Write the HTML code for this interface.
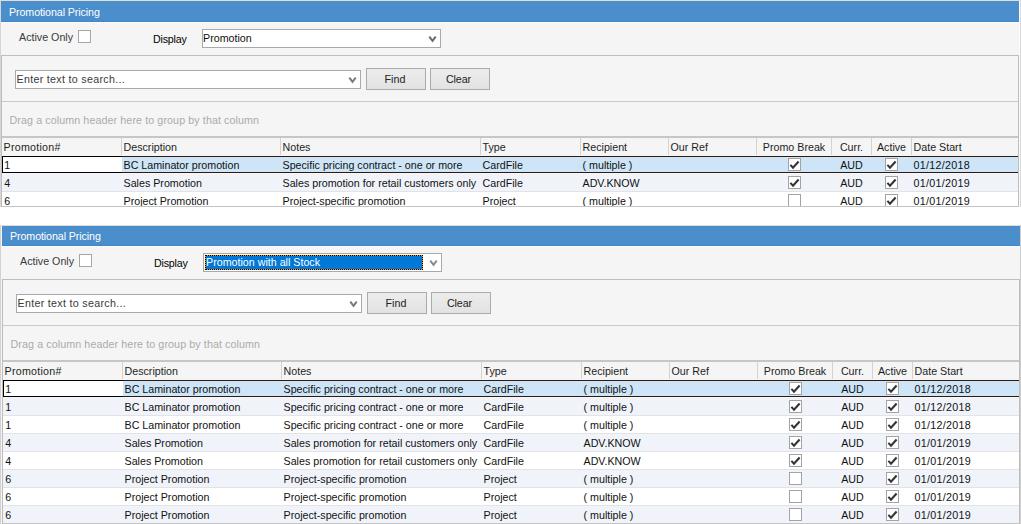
<!DOCTYPE html>
<html><head><meta charset="utf-8"><style>
html,body{margin:0;padding:0;}
body{width:1021px;height:524px;overflow:hidden;background:#ffffff;position:relative;font-family:"Liberation Sans",sans-serif;}
.panel{position:absolute;overflow:hidden;}
.r{position:absolute;}
.t{position:absolute;white-space:nowrap;font-size:10.7px;line-height:13px;}
.cb{width:13px;height:13px;box-sizing:border-box;border:1px solid #a3a3a3;background:#fff;}
.btn{box-sizing:border-box;border:1px solid #ababab;background:linear-gradient(#ececec,#e2e2e2);}
.focus{box-sizing:border-box;background:#f7931e;border:1px dotted #000;}
</style></head><body>
<div class="panel" style="left:0px;top:0px;width:1021px;height:207px;">
<div class="r" style="left:0px;top:0px;width:1021px;height:1px;background:#e2ddd7;"></div>
<div class="r" style="left:0px;top:0px;width:1px;height:207px;background:#d6d6d6;"></div>
<div class="r" style="left:1px;top:1px;width:1018px;height:21px;background:#4a8ecb;"></div>
<div class="r" style="left:1px;top:21px;width:1018px;height:1px;background:#4186c7;"></div>
<div class="r" style="left:1px;top:22px;width:1019px;height:1px;background:#fdfdfd;"></div>
<div class="r" style="left:1px;top:23px;width:1019px;height:184px;background:#f5f5f5;"></div>
<div class="r" style="left:1019px;top:1px;width:1px;height:207px;background:#fbfbfb;"></div>
<div class="r" style="left:1020px;top:0px;width:1px;height:207px;background:#d9d9d9;"></div>
<div class="t" style="left:9px;top:5.8px;color:#ffffff;letter-spacing:-0.1px;">Promotional Pricing</div>
<div class="t" style="left:19px;top:30.8px;color:#3a3a3a;">Active Only</div>
<div class="r" style="left:78px;top:30px;width:13px;height:13px;background:#ffffff;box-sizing:border-box;border:1px solid #a6a6a6;"></div>
<div class="t" style="left:153px;top:32.8px;color:#000000;letter-spacing:-0.2px;">Display</div>
<div class="r" style="left:202px;top:29px;width:239px;height:19px;background:#ffffff;box-sizing:border-box;border:1px solid #a9a9a9;"></div>
<div class="t" style="left:203px;top:31.8px;color:#111111;">Promotion</div>
<svg class="r" style="left:428px;top:36px" width="9" height="7" viewBox="0 0 9 7"><path d="M1.3 0.6 L4.5 4.9 L7.7 0.6" fill="none" stroke="#6a6a6a" stroke-width="2"/></svg>
<div class="r" style="left:1px;top:55px;width:1018px;height:152px;background:#f5f5f5;box-sizing:border-box;border:1px solid #bdbdbd;border-bottom:none;"></div>
<div class="r" style="left:15px;top:70px;width:346px;height:19px;background:#ffffff;box-sizing:border-box;border:1px solid #a9a9a9;"></div>
<div class="t" style="left:16.5px;top:72.8px;color:#3a3a3a;letter-spacing:0.3px;">Enter text to search...</div>
<svg class="r" style="left:348px;top:77px" width="9" height="7" viewBox="0 0 9 7"><path d="M1.3 0.6 L4.5 4.9 L7.7 0.6" fill="none" stroke="#7a7a7a" stroke-width="2"/></svg>
<div class="r btn" style="left:366px;top:68px;width:60px;height:22px;"></div>
<div class="t" style="left:365px;width:60px;text-align:center;top:72.8px;color:#222;">Find</div>
<div class="r btn" style="left:430px;top:68px;width:60px;height:22px;"></div>
<div class="t" style="left:428.5px;width:60px;text-align:center;top:72.8px;color:#222;letter-spacing:-0.1px;">Clear</div>
<div class="r" style="left:2px;top:101px;width:1016px;height:1px;background:#c9c9c9;"></div>
<div class="t" style="left:9.5px;top:113.8px;color:#ababab;letter-spacing:0.1px;">Drag a column header here to group by that column</div>
<div class="r" style="left:2px;top:136px;width:1016px;height:2px;background:#c6c6c6;"></div>
<div class="t" style="left:3.5px;top:140.8px;color:#1e1e1e;letter-spacing:0.25px;">Promotion#</div>
<div class="r" style="left:121px;top:138px;width:1px;height:17px;background:#d3d3d3;"></div>
<div class="t" style="left:123.5px;top:140.8px;color:#1e1e1e;">Description</div>
<div class="r" style="left:280px;top:138px;width:1px;height:17px;background:#d3d3d3;"></div>
<div class="t" style="left:282.5px;top:140.8px;color:#1e1e1e;">Notes</div>
<div class="r" style="left:480px;top:138px;width:1px;height:17px;background:#d3d3d3;"></div>
<div class="t" style="left:482.5px;top:140.8px;color:#1e1e1e;">Type</div>
<div class="r" style="left:580px;top:138px;width:1px;height:17px;background:#d3d3d3;"></div>
<div class="t" style="left:582.5px;top:140.8px;color:#1e1e1e;">Recipient</div>
<div class="r" style="left:668px;top:138px;width:1px;height:17px;background:#d3d3d3;"></div>
<div class="t" style="left:670.5px;top:140.8px;color:#1e1e1e;">Our Ref</div>
<div class="r" style="left:756px;top:138px;width:1px;height:17px;background:#d3d3d3;"></div>
<div class="t" style="left:757px;width:74px;text-align:center;top:140.8px;color:#1e1e1e;">Promo Break</div>
<div class="r" style="left:831px;top:138px;width:1px;height:17px;background:#d3d3d3;"></div>
<div class="t" style="left:832px;width:39px;text-align:center;top:140.8px;color:#1e1e1e;">Curr.</div>
<div class="r" style="left:871px;top:138px;width:1px;height:17px;background:#d3d3d3;"></div>
<div class="t" style="left:872px;width:39px;text-align:center;top:140.8px;color:#1e1e1e;">Active</div>
<div class="r" style="left:911px;top:138px;width:1px;height:17px;background:#d3d3d3;"></div>
<div class="t" style="left:913.5px;top:140.8px;color:#1e1e1e;">Date Start</div>
<div class="r" style="left:2px;top:156px;width:1016px;height:17px;background:#cde5f7;"></div>
<div class="r" style="left:2px;top:173px;width:1016px;height:1px;background:#f4f8fb;"></div>
<div class="r" style="left:2px;top:156px;width:120px;height:17px;background:#ffffff;"></div>
<div class="r" style="left:2px;top:156px;width:120px;height:1px;background:#000;"></div>
<div class="r" style="left:2px;top:172px;width:120px;height:1px;background:#000;"></div>
<div class="r" style="left:2px;top:156px;width:1px;height:17px;background:#000;"></div>
<div class="r" style="left:122px;top:156px;width:896px;height:1px;background:#33190a;"></div>
<div class="r" style="left:122px;top:172px;width:896px;height:1px;background:#33190a;"></div>
<div class="t" style="left:4.2px;top:158.8px;color:#111111;">1</div>
<div class="t" style="left:123.5px;top:158.8px;color:#111111;">BC Laminator promotion</div>
<div class="t" style="left:282.5px;top:158.8px;color:#111111;">Specific pricing contract - one or more</div>
<div class="t" style="left:482.5px;top:158.8px;color:#111111;">CardFile</div>
<div class="t" style="left:582.5px;top:158.8px;color:#111111;">( multiple )</div>
<div class="r cb" style="left:788px;top:158px;"></div><svg class="r" style="left:788px;top:158px" width="13" height="13" viewBox="0 0 13 13"><path d="M2.4 6.9 L5 9.7 L10.6 3.5" fill="none" stroke="#353535" stroke-width="2.1"/></svg>
<div class="t" style="left:832px;width:39px;text-align:center;top:158.8px;color:#111111;">AUD</div>
<div class="r cb" style="left:885px;top:158px;"></div><svg class="r" style="left:885px;top:158px" width="13" height="13" viewBox="0 0 13 13"><path d="M2.4 6.9 L5 9.7 L10.6 3.5" fill="none" stroke="#353535" stroke-width="2.1"/></svg>
<div class="t" style="left:913.5px;top:158.8px;color:#111111;letter-spacing:0.3px;">01/12/2018</div>
<div class="r" style="left:2px;top:174px;width:1016px;height:17px;background:#f0f4fa;"></div>
<div class="r" style="left:2px;top:191px;width:1016px;height:1px;background:#e3e3e3;"></div>
<div class="t" style="left:4.2px;top:176.8px;color:#111111;">4</div>
<div class="t" style="left:123.5px;top:176.8px;color:#111111;">Sales Promotion</div>
<div class="t" style="left:282.5px;top:176.8px;color:#111111;">Sales promotion for retail customers only</div>
<div class="t" style="left:482.5px;top:176.8px;color:#111111;">CardFile</div>
<div class="t" style="left:582.5px;top:176.8px;color:#111111;">ADV.KNOW</div>
<div class="r cb" style="left:788px;top:176px;"></div><svg class="r" style="left:788px;top:176px" width="13" height="13" viewBox="0 0 13 13"><path d="M2.4 6.9 L5 9.7 L10.6 3.5" fill="none" stroke="#353535" stroke-width="2.1"/></svg>
<div class="t" style="left:832px;width:39px;text-align:center;top:176.8px;color:#111111;">AUD</div>
<div class="r cb" style="left:885px;top:176px;"></div><svg class="r" style="left:885px;top:176px" width="13" height="13" viewBox="0 0 13 13"><path d="M2.4 6.9 L5 9.7 L10.6 3.5" fill="none" stroke="#353535" stroke-width="2.1"/></svg>
<div class="t" style="left:913.5px;top:176.8px;color:#111111;letter-spacing:0.3px;">01/01/2019</div>
<div class="r" style="left:2px;top:192px;width:1016px;height:17px;background:#ffffff;"></div>
<div class="r" style="left:2px;top:209px;width:1016px;height:1px;background:#e3e3e3;"></div>
<div class="t" style="left:4.2px;top:194.8px;color:#111111;">6</div>
<div class="t" style="left:123.5px;top:194.8px;color:#111111;">Project Promotion</div>
<div class="t" style="left:282.5px;top:194.8px;color:#111111;">Project-specific promotion</div>
<div class="t" style="left:482.5px;top:194.8px;color:#111111;">Project</div>
<div class="t" style="left:582.5px;top:194.8px;color:#111111;">( multiple )</div>
<div class="r cb" style="left:788px;top:194px;"></div>
<div class="t" style="left:832px;width:39px;text-align:center;top:194.8px;color:#111111;">AUD</div>
<div class="r cb" style="left:885px;top:194px;"></div><svg class="r" style="left:885px;top:194px" width="13" height="13" viewBox="0 0 13 13"><path d="M2.4 6.9 L5 9.7 L10.6 3.5" fill="none" stroke="#353535" stroke-width="2.1"/></svg>
<div class="t" style="left:913.5px;top:194.8px;color:#111111;letter-spacing:0.3px;">01/01/2019</div>
<div class="r" style="left:1px;top:206px;width:1018px;height:1px;background:#c4c4c4;"></div>
</div>
<div class="panel" style="left:1px;top:224px;width:1021px;height:300px;">
<div class="r" style="left:0px;top:1px;width:1021px;height:1px;background:#e2ddd7;"></div>
<div class="r" style="left:0px;top:1px;width:1px;height:300px;background:#f4f4f4;"></div>
<div class="r" style="left:1px;top:2px;width:1018px;height:20px;background:#4a8ecb;"></div>
<div class="r" style="left:1px;top:21px;width:1018px;height:1px;background:#4186c7;"></div>
<div class="r" style="left:1px;top:22px;width:1019px;height:1px;background:#fdfdfd;"></div>
<div class="r" style="left:1px;top:23px;width:1019px;height:277px;background:#f5f5f5;"></div>
<div class="r" style="left:1019px;top:1px;width:1px;height:300px;background:#fbfbfb;"></div>
<div class="r" style="left:1020px;top:0px;width:1px;height:300px;background:#d9d9d9;"></div>
<div class="t" style="left:9px;top:5.8px;color:#ffffff;letter-spacing:-0.1px;">Promotional Pricing</div>
<div class="t" style="left:19px;top:30.8px;color:#3a3a3a;">Active Only</div>
<div class="r" style="left:78px;top:30px;width:13px;height:13px;background:#ffffff;box-sizing:border-box;border:1px solid #a6a6a6;"></div>
<div class="t" style="left:153px;top:32.8px;color:#000000;letter-spacing:-0.2px;">Display</div>
<div class="r" style="left:202px;top:29px;width:239px;height:19px;background:#ffffff;box-sizing:border-box;border:1px solid #a9a9a9;"></div>
<div class="r focus" style="left:204px;top:31px;width:218px;height:15px;"><div style="position:absolute;left:0;top:0;width:216px;height:13px;background:#0078d7"></div></div>
<div class="t" style="left:205px;top:31.8px;color:#ffffff;">Promotion with all Stock</div>
<svg class="r" style="left:428px;top:36px" width="9" height="7" viewBox="0 0 9 7"><path d="M1.3 0.6 L4.5 4.9 L7.7 0.6" fill="none" stroke="#8a8a8a" stroke-width="2"/></svg>
<div class="r" style="left:1px;top:55px;width:1018px;height:245px;background:#f5f5f5;box-sizing:border-box;border:1px solid #bdbdbd;border-bottom:none;"></div>
<div class="r" style="left:15px;top:70px;width:346px;height:19px;background:#ffffff;box-sizing:border-box;border:1px solid #a9a9a9;"></div>
<div class="t" style="left:16.5px;top:72.8px;color:#3a3a3a;letter-spacing:0.3px;">Enter text to search...</div>
<svg class="r" style="left:348px;top:77px" width="9" height="7" viewBox="0 0 9 7"><path d="M1.3 0.6 L4.5 4.9 L7.7 0.6" fill="none" stroke="#7a7a7a" stroke-width="2"/></svg>
<div class="r btn" style="left:366px;top:68px;width:60px;height:22px;"></div>
<div class="t" style="left:365px;width:60px;text-align:center;top:72.8px;color:#222;">Find</div>
<div class="r btn" style="left:430px;top:68px;width:60px;height:22px;"></div>
<div class="t" style="left:428.5px;width:60px;text-align:center;top:72.8px;color:#222;letter-spacing:-0.1px;">Clear</div>
<div class="r" style="left:2px;top:101px;width:1016px;height:1px;background:#c9c9c9;"></div>
<div class="t" style="left:9.5px;top:113.8px;color:#ababab;letter-spacing:0.1px;">Drag a column header here to group by that column</div>
<div class="r" style="left:2px;top:136px;width:1016px;height:2px;background:#c6c6c6;"></div>
<div class="t" style="left:3.5px;top:140.8px;color:#1e1e1e;letter-spacing:0.25px;">Promotion#</div>
<div class="r" style="left:121px;top:138px;width:1px;height:17px;background:#d3d3d3;"></div>
<div class="t" style="left:123.5px;top:140.8px;color:#1e1e1e;">Description</div>
<div class="r" style="left:280px;top:138px;width:1px;height:17px;background:#d3d3d3;"></div>
<div class="t" style="left:282.5px;top:140.8px;color:#1e1e1e;">Notes</div>
<div class="r" style="left:480px;top:138px;width:1px;height:17px;background:#d3d3d3;"></div>
<div class="t" style="left:482.5px;top:140.8px;color:#1e1e1e;">Type</div>
<div class="r" style="left:580px;top:138px;width:1px;height:17px;background:#d3d3d3;"></div>
<div class="t" style="left:582.5px;top:140.8px;color:#1e1e1e;">Recipient</div>
<div class="r" style="left:668px;top:138px;width:1px;height:17px;background:#d3d3d3;"></div>
<div class="t" style="left:670.5px;top:140.8px;color:#1e1e1e;">Our Ref</div>
<div class="r" style="left:756px;top:138px;width:1px;height:17px;background:#d3d3d3;"></div>
<div class="t" style="left:757px;width:74px;text-align:center;top:140.8px;color:#1e1e1e;">Promo Break</div>
<div class="r" style="left:831px;top:138px;width:1px;height:17px;background:#d3d3d3;"></div>
<div class="t" style="left:832px;width:39px;text-align:center;top:140.8px;color:#1e1e1e;">Curr.</div>
<div class="r" style="left:871px;top:138px;width:1px;height:17px;background:#d3d3d3;"></div>
<div class="t" style="left:872px;width:39px;text-align:center;top:140.8px;color:#1e1e1e;">Active</div>
<div class="r" style="left:911px;top:138px;width:1px;height:17px;background:#d3d3d3;"></div>
<div class="t" style="left:913.5px;top:140.8px;color:#1e1e1e;">Date Start</div>
<div class="r" style="left:2px;top:156px;width:1016px;height:17px;background:#cde5f7;"></div>
<div class="r" style="left:2px;top:173px;width:1016px;height:1px;background:#f4f8fb;"></div>
<div class="r" style="left:2px;top:156px;width:120px;height:17px;background:#ffffff;"></div>
<div class="r" style="left:2px;top:156px;width:120px;height:1px;background:#000;"></div>
<div class="r" style="left:2px;top:172px;width:120px;height:1px;background:#000;"></div>
<div class="r" style="left:2px;top:156px;width:1px;height:17px;background:#000;"></div>
<div class="r" style="left:122px;top:156px;width:896px;height:1px;background:#33190a;"></div>
<div class="r" style="left:122px;top:172px;width:896px;height:1px;background:#33190a;"></div>
<div class="t" style="left:4.2px;top:158.8px;color:#111111;">1</div>
<div class="t" style="left:123.5px;top:158.8px;color:#111111;">BC Laminator promotion</div>
<div class="t" style="left:282.5px;top:158.8px;color:#111111;">Specific pricing contract - one or more</div>
<div class="t" style="left:482.5px;top:158.8px;color:#111111;">CardFile</div>
<div class="t" style="left:582.5px;top:158.8px;color:#111111;">( multiple )</div>
<div class="r cb" style="left:788px;top:158px;"></div><svg class="r" style="left:788px;top:158px" width="13" height="13" viewBox="0 0 13 13"><path d="M2.4 6.9 L5 9.7 L10.6 3.5" fill="none" stroke="#353535" stroke-width="2.1"/></svg>
<div class="t" style="left:832px;width:39px;text-align:center;top:158.8px;color:#111111;">AUD</div>
<div class="r cb" style="left:885px;top:158px;"></div><svg class="r" style="left:885px;top:158px" width="13" height="13" viewBox="0 0 13 13"><path d="M2.4 6.9 L5 9.7 L10.6 3.5" fill="none" stroke="#353535" stroke-width="2.1"/></svg>
<div class="t" style="left:913.5px;top:158.8px;color:#111111;letter-spacing:0.3px;">01/12/2018</div>
<div class="r" style="left:2px;top:174px;width:1016px;height:17px;background:#f0f4fa;"></div>
<div class="r" style="left:2px;top:191px;width:1016px;height:1px;background:#e3e3e3;"></div>
<div class="t" style="left:4.2px;top:176.8px;color:#111111;">1</div>
<div class="t" style="left:123.5px;top:176.8px;color:#111111;">BC Laminator promotion</div>
<div class="t" style="left:282.5px;top:176.8px;color:#111111;">Specific pricing contract - one or more</div>
<div class="t" style="left:482.5px;top:176.8px;color:#111111;">CardFile</div>
<div class="t" style="left:582.5px;top:176.8px;color:#111111;">( multiple )</div>
<div class="r cb" style="left:788px;top:176px;"></div><svg class="r" style="left:788px;top:176px" width="13" height="13" viewBox="0 0 13 13"><path d="M2.4 6.9 L5 9.7 L10.6 3.5" fill="none" stroke="#353535" stroke-width="2.1"/></svg>
<div class="t" style="left:832px;width:39px;text-align:center;top:176.8px;color:#111111;">AUD</div>
<div class="r cb" style="left:885px;top:176px;"></div><svg class="r" style="left:885px;top:176px" width="13" height="13" viewBox="0 0 13 13"><path d="M2.4 6.9 L5 9.7 L10.6 3.5" fill="none" stroke="#353535" stroke-width="2.1"/></svg>
<div class="t" style="left:913.5px;top:176.8px;color:#111111;letter-spacing:0.3px;">01/12/2018</div>
<div class="r" style="left:2px;top:192px;width:1016px;height:17px;background:#ffffff;"></div>
<div class="r" style="left:2px;top:209px;width:1016px;height:1px;background:#e3e3e3;"></div>
<div class="t" style="left:4.2px;top:194.8px;color:#111111;">1</div>
<div class="t" style="left:123.5px;top:194.8px;color:#111111;">BC Laminator promotion</div>
<div class="t" style="left:282.5px;top:194.8px;color:#111111;">Specific pricing contract - one or more</div>
<div class="t" style="left:482.5px;top:194.8px;color:#111111;">CardFile</div>
<div class="t" style="left:582.5px;top:194.8px;color:#111111;">( multiple )</div>
<div class="r cb" style="left:788px;top:194px;"></div><svg class="r" style="left:788px;top:194px" width="13" height="13" viewBox="0 0 13 13"><path d="M2.4 6.9 L5 9.7 L10.6 3.5" fill="none" stroke="#353535" stroke-width="2.1"/></svg>
<div class="t" style="left:832px;width:39px;text-align:center;top:194.8px;color:#111111;">AUD</div>
<div class="r cb" style="left:885px;top:194px;"></div><svg class="r" style="left:885px;top:194px" width="13" height="13" viewBox="0 0 13 13"><path d="M2.4 6.9 L5 9.7 L10.6 3.5" fill="none" stroke="#353535" stroke-width="2.1"/></svg>
<div class="t" style="left:913.5px;top:194.8px;color:#111111;letter-spacing:0.3px;">01/12/2018</div>
<div class="r" style="left:2px;top:210px;width:1016px;height:17px;background:#f0f4fa;"></div>
<div class="r" style="left:2px;top:227px;width:1016px;height:1px;background:#e3e3e3;"></div>
<div class="t" style="left:4.2px;top:212.8px;color:#111111;">4</div>
<div class="t" style="left:123.5px;top:212.8px;color:#111111;">Sales Promotion</div>
<div class="t" style="left:282.5px;top:212.8px;color:#111111;">Sales promotion for retail customers only</div>
<div class="t" style="left:482.5px;top:212.8px;color:#111111;">CardFile</div>
<div class="t" style="left:582.5px;top:212.8px;color:#111111;">ADV.KNOW</div>
<div class="r cb" style="left:788px;top:212px;"></div><svg class="r" style="left:788px;top:212px" width="13" height="13" viewBox="0 0 13 13"><path d="M2.4 6.9 L5 9.7 L10.6 3.5" fill="none" stroke="#353535" stroke-width="2.1"/></svg>
<div class="t" style="left:832px;width:39px;text-align:center;top:212.8px;color:#111111;">AUD</div>
<div class="r cb" style="left:885px;top:212px;"></div><svg class="r" style="left:885px;top:212px" width="13" height="13" viewBox="0 0 13 13"><path d="M2.4 6.9 L5 9.7 L10.6 3.5" fill="none" stroke="#353535" stroke-width="2.1"/></svg>
<div class="t" style="left:913.5px;top:212.8px;color:#111111;letter-spacing:0.3px;">01/01/2019</div>
<div class="r" style="left:2px;top:228px;width:1016px;height:17px;background:#ffffff;"></div>
<div class="r" style="left:2px;top:245px;width:1016px;height:1px;background:#e3e3e3;"></div>
<div class="t" style="left:4.2px;top:230.8px;color:#111111;">4</div>
<div class="t" style="left:123.5px;top:230.8px;color:#111111;">Sales Promotion</div>
<div class="t" style="left:282.5px;top:230.8px;color:#111111;">Sales promotion for retail customers only</div>
<div class="t" style="left:482.5px;top:230.8px;color:#111111;">CardFile</div>
<div class="t" style="left:582.5px;top:230.8px;color:#111111;">ADV.KNOW</div>
<div class="r cb" style="left:788px;top:230px;"></div><svg class="r" style="left:788px;top:230px" width="13" height="13" viewBox="0 0 13 13"><path d="M2.4 6.9 L5 9.7 L10.6 3.5" fill="none" stroke="#353535" stroke-width="2.1"/></svg>
<div class="t" style="left:832px;width:39px;text-align:center;top:230.8px;color:#111111;">AUD</div>
<div class="r cb" style="left:885px;top:230px;"></div><svg class="r" style="left:885px;top:230px" width="13" height="13" viewBox="0 0 13 13"><path d="M2.4 6.9 L5 9.7 L10.6 3.5" fill="none" stroke="#353535" stroke-width="2.1"/></svg>
<div class="t" style="left:913.5px;top:230.8px;color:#111111;letter-spacing:0.3px;">01/01/2019</div>
<div class="r" style="left:2px;top:246px;width:1016px;height:17px;background:#f0f4fa;"></div>
<div class="r" style="left:2px;top:263px;width:1016px;height:1px;background:#e3e3e3;"></div>
<div class="t" style="left:4.2px;top:248.8px;color:#111111;">6</div>
<div class="t" style="left:123.5px;top:248.8px;color:#111111;">Project Promotion</div>
<div class="t" style="left:282.5px;top:248.8px;color:#111111;">Project-specific promotion</div>
<div class="t" style="left:482.5px;top:248.8px;color:#111111;">Project</div>
<div class="t" style="left:582.5px;top:248.8px;color:#111111;">( multiple )</div>
<div class="r cb" style="left:788px;top:248px;"></div>
<div class="t" style="left:832px;width:39px;text-align:center;top:248.8px;color:#111111;">AUD</div>
<div class="r cb" style="left:885px;top:248px;"></div><svg class="r" style="left:885px;top:248px" width="13" height="13" viewBox="0 0 13 13"><path d="M2.4 6.9 L5 9.7 L10.6 3.5" fill="none" stroke="#353535" stroke-width="2.1"/></svg>
<div class="t" style="left:913.5px;top:248.8px;color:#111111;letter-spacing:0.3px;">01/01/2019</div>
<div class="r" style="left:2px;top:264px;width:1016px;height:17px;background:#ffffff;"></div>
<div class="r" style="left:2px;top:281px;width:1016px;height:1px;background:#e3e3e3;"></div>
<div class="t" style="left:4.2px;top:266.8px;color:#111111;">6</div>
<div class="t" style="left:123.5px;top:266.8px;color:#111111;">Project Promotion</div>
<div class="t" style="left:282.5px;top:266.8px;color:#111111;">Project-specific promotion</div>
<div class="t" style="left:482.5px;top:266.8px;color:#111111;">Project</div>
<div class="t" style="left:582.5px;top:266.8px;color:#111111;">( multiple )</div>
<div class="r cb" style="left:788px;top:266px;"></div>
<div class="t" style="left:832px;width:39px;text-align:center;top:266.8px;color:#111111;">AUD</div>
<div class="r cb" style="left:885px;top:266px;"></div><svg class="r" style="left:885px;top:266px" width="13" height="13" viewBox="0 0 13 13"><path d="M2.4 6.9 L5 9.7 L10.6 3.5" fill="none" stroke="#353535" stroke-width="2.1"/></svg>
<div class="t" style="left:913.5px;top:266.8px;color:#111111;letter-spacing:0.3px;">01/01/2019</div>
<div class="r" style="left:2px;top:282px;width:1016px;height:17px;background:#f0f4fa;"></div>
<div class="r" style="left:2px;top:299px;width:1016px;height:1px;background:#e3e3e3;"></div>
<div class="t" style="left:4.2px;top:284.8px;color:#111111;">6</div>
<div class="t" style="left:123.5px;top:284.8px;color:#111111;">Project Promotion</div>
<div class="t" style="left:282.5px;top:284.8px;color:#111111;">Project-specific promotion</div>
<div class="t" style="left:482.5px;top:284.8px;color:#111111;">Project</div>
<div class="t" style="left:582.5px;top:284.8px;color:#111111;">( multiple )</div>
<div class="r cb" style="left:788px;top:284px;"></div>
<div class="t" style="left:832px;width:39px;text-align:center;top:284.8px;color:#111111;">AUD</div>
<div class="r cb" style="left:885px;top:284px;"></div><svg class="r" style="left:885px;top:284px" width="13" height="13" viewBox="0 0 13 13"><path d="M2.4 6.9 L5 9.7 L10.6 3.5" fill="none" stroke="#353535" stroke-width="2.1"/></svg>
<div class="t" style="left:913.5px;top:284.8px;color:#111111;letter-spacing:0.3px;">01/01/2019</div>
<div class="r" style="left:1px;top:299px;width:1018px;height:1px;background:#c4c4c4;"></div>
</div>
<div class="r" style="left:0px;top:225px;width:1px;height:299px;background:#d2d2d2;"></div>
<div class="r" style="left:1020px;top:225px;width:1px;height:299px;background:#cdcdcd;"></div>
</body></html>
